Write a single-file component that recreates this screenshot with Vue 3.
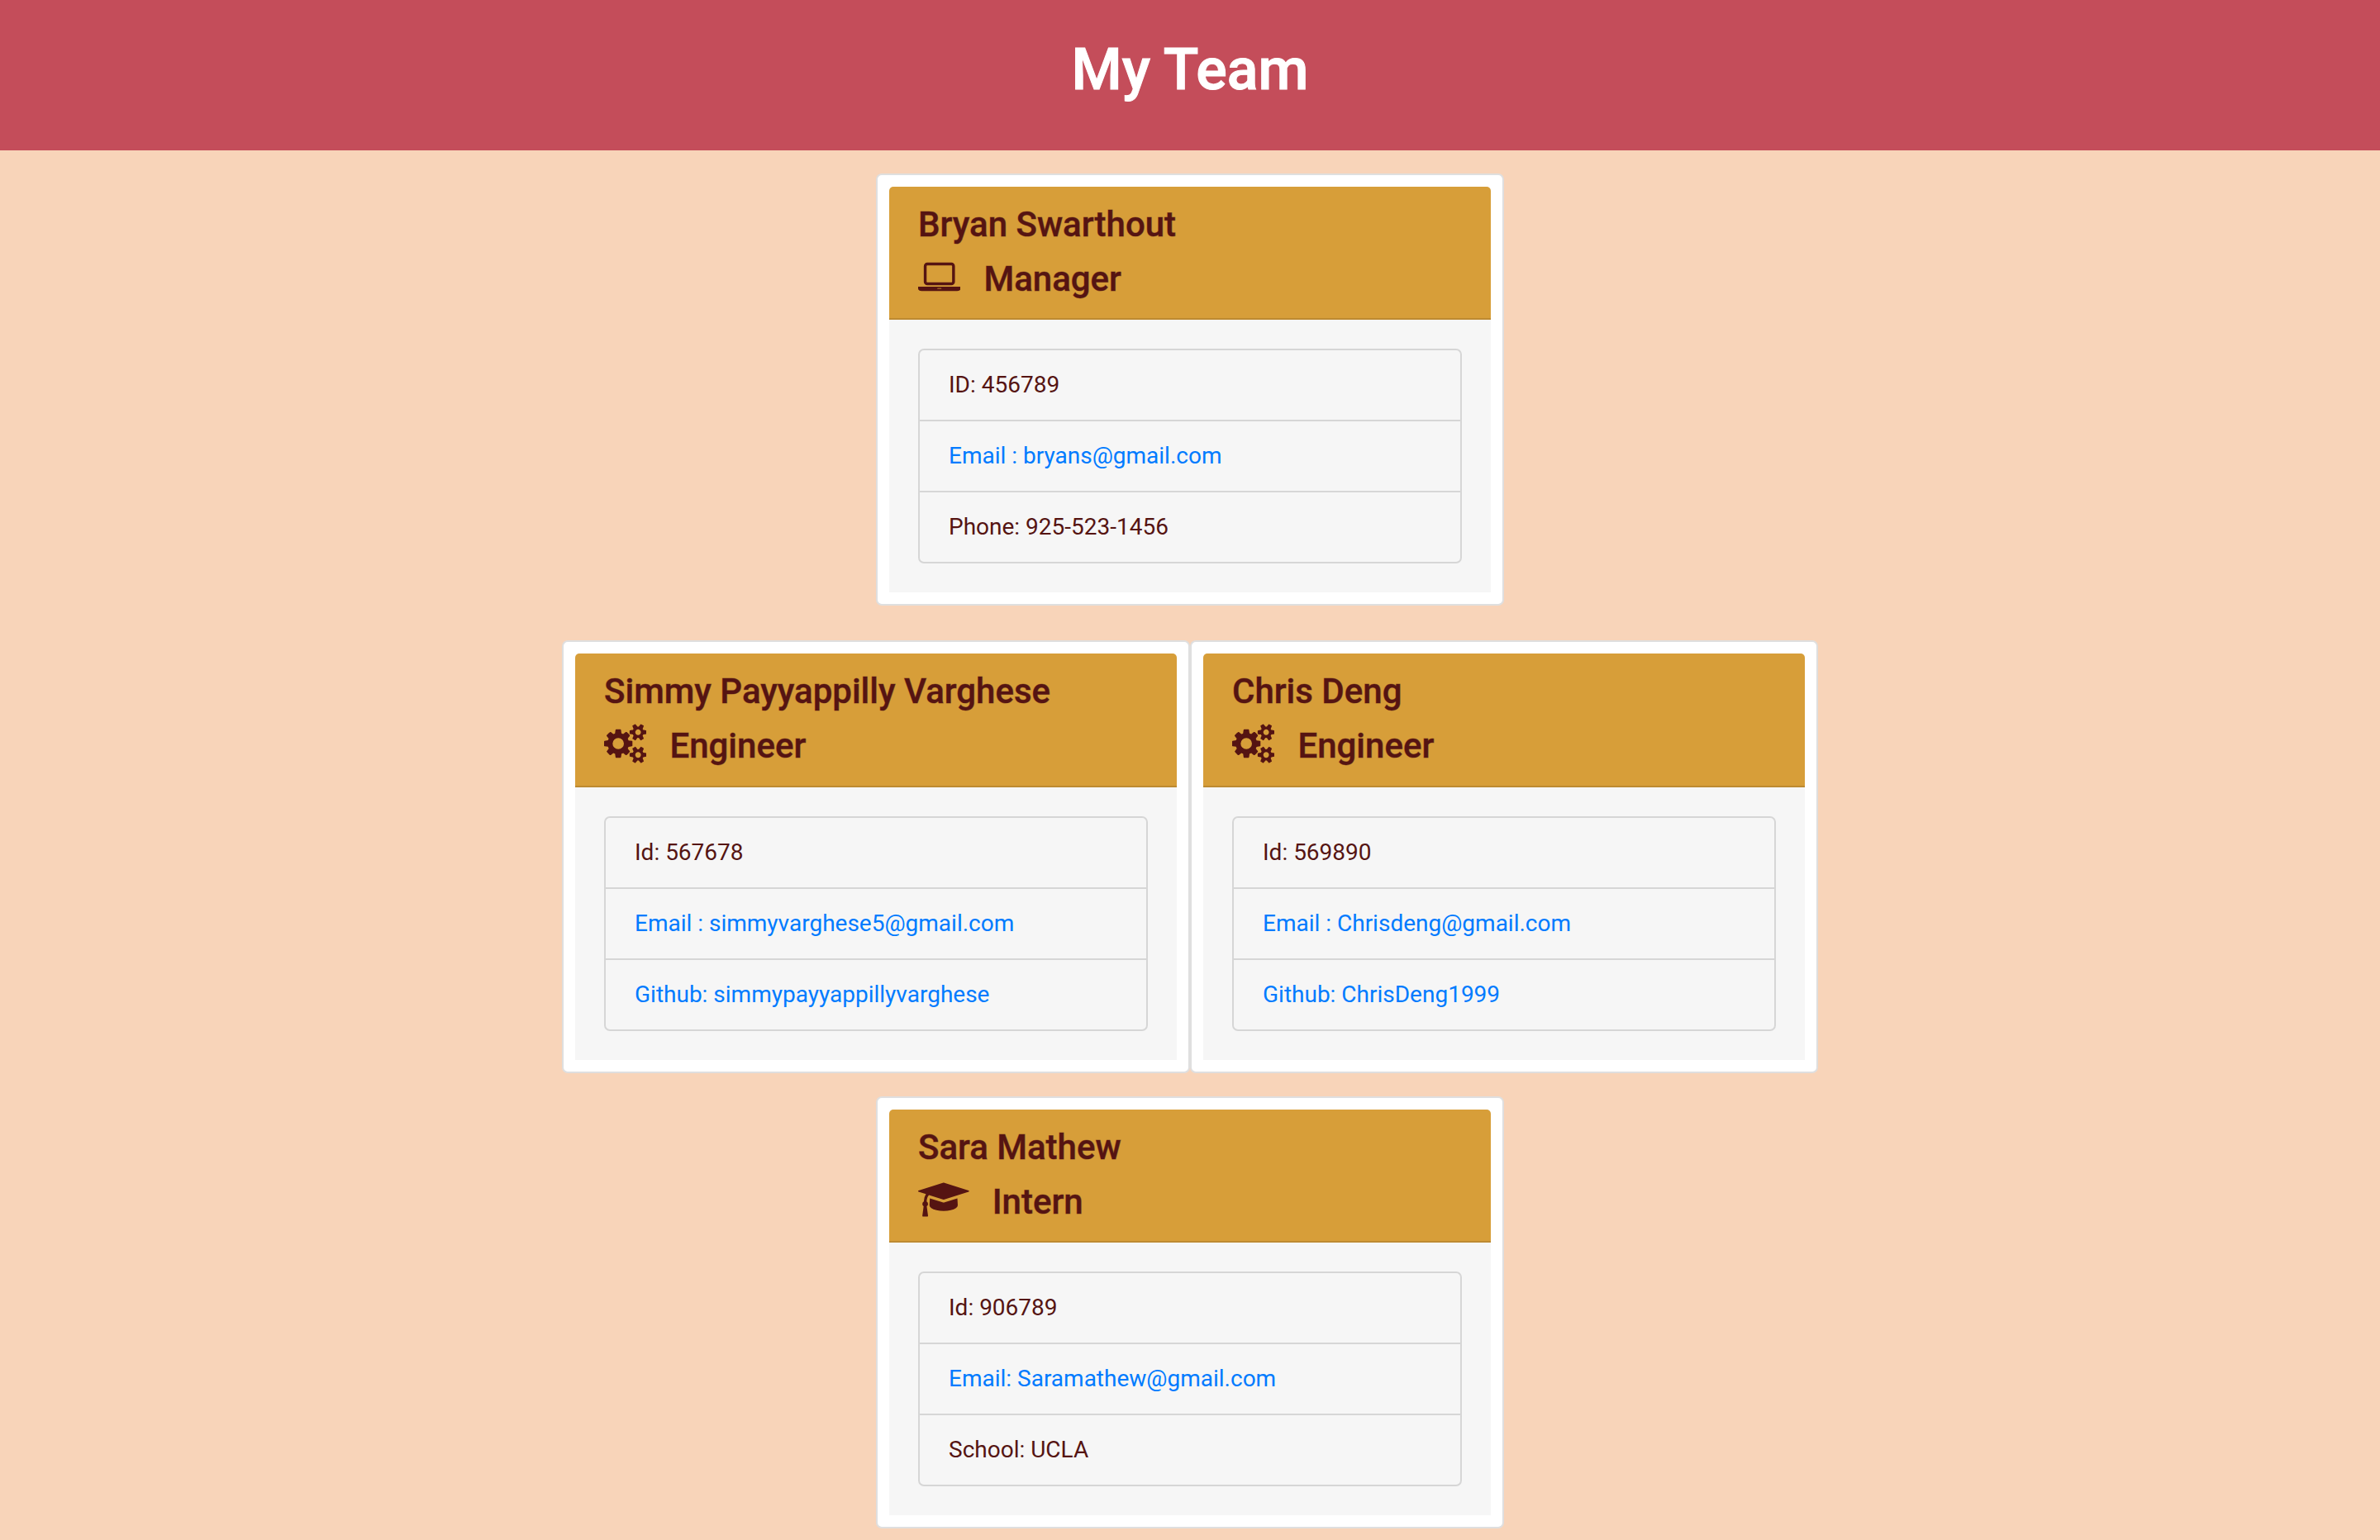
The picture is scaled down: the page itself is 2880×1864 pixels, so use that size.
<script setup>
const icons = {
  laptop: {
    box: '0 0 1920 1792',
    path: 'M416 1280q-66 0-113-47t-47-113v-704q0-66 47-113t113-47h1088q66 0 113 47t47 113v704q0 66-47 113t-113 47h-1088zm-32-864v704q0 13 9.5 22.5t22.5 9.5h1088q13 0 22.5-9.5t9.5-22.5v-704q0-13-9.5-22.5t-22.5-9.5h-1088q-13 0-22.5 9.5t-9.5 22.5zm1376 928h160v96q0 40-47 68t-113 28h-1600q-66 0-113-28t-47-68v-96h1760zm-720 96q16 0 16-16t-16-16h-160q-16 0-16 16t16 16h160z'
  },
  cogs: {
    box: '0 0 1920 1792',
    path: 'M896 896q0-106-75-181t-181-75-181 75-75 181 75 181 181 75 181-75 75-181zm768 512q0-52-38-90t-90-38-90 38-38 90q0 53 37.5 90.5t90.5 37.5 90.5-37.5 37.5-90.5zm0-1024q0-52-38-90t-90-38-90 38-38 90q0 53 37.5 90.5t90.5 37.5 90.5-37.5 37.5-90.5zm-384 421v185q0 10-7 19.5t-16 10.5l-155 24q-11 35-32 76 34 48 90 115 7 11 7 20 0 12-7 19-23 30-82.5 89.5t-78.5 59.5q-11 0-21-7l-115-90q-37 19-77 31-11 108-23 155-7 24-30 24h-186q-11 0-20-7.5t-10-17.5l-23-153q-34-10-75-31l-118 89q-7 7-20 7-11 0-21-8-144-133-144-160 0-9 7-19 10-14 41-53t47-61q-23-44-35-82l-152-24q-10-1-17-9.5t-7-19.5v-185q0-10 7-19.5t16-10.5l155-24q11-35 32-76-34-48-90-115-7-11-7-20 0-12 7-20 22-30 82-89t79-59q11 0 21 7l115 90q34-18 77-32 11-108 23-154 7-24 30-24h186q11 0 20 7.5t10 17.5l23 153q34 10 75 31l118-89q8-7 20-7 11 0 21 8 144 133 144 160 0 8-7 19-12 16-42 54t-45 60q23 48 34 82l152 23q10 2 17 10.5t7 19.5zm640 533v140q0 16-149 31-12 27-30 52 51 113 51 138 0 4-4 7-122 71-124 71-8 0-46-47t-52-68q-20 2-30 2t-30-2q-14 21-52 68t-46 47q-2 0-124-71-4-3-4-7 0-25 51-138-18-25-30-52-149-15-149-31v-140q0-16 149-31 13-29 30-52-51-113-51-138 0-4 4-7 4-2 35-20t59-34 30-16q8 0 46 46.5t52 67.5q20-2 30-2t30 2q51-71 92-112l6-2q4 0 124 70 4 3 4 7 0 25-51 138 17 23 30 52 149 15 149 31zm0-1024v140q0 16-149 31-12 27-30 52 51 113 51 138 0 4-4 7-122 71-124 71-8 0-46-47t-52-68q-20 2-30 2t-30-2q-14 21-52 68t-46 47q-2 0-124-71-4-3-4-7 0-25 51-138-18-25-30-52-149-15-149-31v-140q0-16 149-31 13-29 30-52-51-113-51-138 0-4 4-7 4-2 35-20t59-34 30-16q8 0 46 46.5t52 67.5q20-2 30-2t30 2q51-71 92-112l6-2q4 0 124 70 4 3 4 7 0 25-51 138 17 23 30 52 149 15 149 31z'
  },
  cap: {
    box: '0 0 2304 1792',
    path: 'M1774 836l18 316q4 69-82 128t-235 93.5-323 34.5-323-34.5-235-93.5-82-128l18-316 574 181q22 7 48 7t48-7zm530-324q0 23-22 31l-1120 352q-4 1-10 1t-10-1l-652-206q-43 34-71 111.5t-34 178.5q63 36 63 109 0 69-58 107l58 433q2 14-8 25-9 11-24 11h-192q-15 0-24-11-10-11-8-25l58-433q-58-38-58-107 0-73 65-111 11-207 98-330l-333-104q-22-8-22-31t22-31l1120-352q4-1 10-1t10 1l1120 352q22 8 22 31z'
  }
}

const rows = [
  {
    id: 'managers',
    members: [
      {
        name: 'Bryan Swarthout',
        role: 'Manager',
        icon: 'laptop',
        details: [
          { text: 'ID: 456789' },
          { text: 'Email : bryans@gmail.com', href: 'mailto:bryans@gmail.com' },
          { text: 'Phone: 925-523-1456' }
        ]
      }
    ]
  },
  {
    id: 'engineers',
    members: [
      {
        name: 'Simmy Payyappilly Varghese',
        role: 'Engineer',
        icon: 'cogs',
        details: [
          { text: 'Id: 567678' },
          { text: 'Email : simmyvarghese5@gmail.com', href: 'mailto:simmyvarghese5@gmail.com' },
          { text: 'Github: simmypayyappillyvarghese', href: 'https://github.com/simmypayyappillyvarghese' }
        ]
      },
      {
        name: 'Chris Deng',
        role: 'Engineer',
        icon: 'cogs',
        details: [
          { text: 'Id: 569890' },
          { text: 'Email : Chrisdeng@gmail.com', href: 'mailto:Chrisdeng@gmail.com' },
          { text: 'Github: ChrisDeng1999', href: 'https://github.com/ChrisDeng1999' }
        ]
      }
    ]
  },
  {
    id: 'interns',
    members: [
      {
        name: 'Sara Mathew',
        role: 'Intern',
        icon: 'cap',
        details: [
          { text: 'Id: 906789' },
          { text: 'Email: Saramathew@gmail.com', href: 'mailto:Saramathew@gmail.com' },
          { text: 'School: UCLA' }
        ]
      }
    ]
  }
]
</script>

<template>
  <header class="banner">
    <h1>My Team</h1>
  </header>
  <main class="team">
    <section v-for="row in rows" :key="row.id" class="row" :class="row.id">
      <article v-for="member in row.members" :key="member.name" class="card">
        <div class="card-header">
          <h2 class="name">{{ member.name }}</h2>
          <h3 class="role">
            <svg class="icon" :viewBox="icons[member.icon].box" aria-hidden="true">
              <path :d="icons[member.icon].path" />
            </svg>
            <span>{{ member.role }}</span>
          </h3>
        </div>
        <div class="card-body">
          <ul class="details">
            <li v-for="item in member.details" :key="item.text">
              <a v-if="item.href" :href="item.href">{{ item.text }}</a>
              <template v-else>{{ item.text }}</template>
            </li>
          </ul>
        </div>
      </article>
    </section>
  </main>
</template>

<style>
body {
  margin: 0;
  background: #f8d4b9;
}
</style>

<style scoped>
.banner {
  padding: 42px 28px 56px;
  background: #c44d5a;
  color: #fff;
  font-family: Roboto, sans-serif;
  text-align: center;
}

.banner h1 {
  margin: 0;
  font-size: 70px;
  font-weight: 500;
  line-height: 84px;
  -webkit-text-stroke: 1px currentColor;
}

.team {
  padding: 28px 0 14px;
  color: #551412;
  font-family: Roboto, sans-serif;
  font-size: 28px;
  line-height: 42px;
}

.row {
  display: flex;
  flex-wrap: wrap;
  justify-content: center;
  margin-bottom: 28px;
}

.row.managers {
  margin-bottom: 42px;
}

.row.interns {
  margin-bottom: 0;
}

.card {
  box-sizing: border-box;
  width: 760px;
  max-width: 100%;
  padding: 14px;
  border: 2px solid #dfdfdf;
  border-radius: 7px;
  background: #fff;
}

.card-header {
  padding: 21px 35px;
  border-bottom: 2px solid #bd8a31;
  border-radius: 5px 5px 0 0;
  background: #d79e39;
}

.name,
.role {
  margin: 0;
  font-size: 42px;
  font-weight: 500;
  -webkit-text-stroke: 1px rgba(85, 20, 18, 0.45);
}

.name {
  margin-bottom: 14px;
  line-height: 50px;
}

.role {
  display: flex;
  align-items: flex-start;
  gap: 28px;
  line-height: 53px;
}

.engineers .role {
  line-height: 54px;
}

.icon {
  height: 48px;
  fill: currentColor;
}

.card-body {
  padding: 35px;
  background: #f6f6f6;
}

.details {
  margin: 0;
  padding: 0;
  border: 2px solid #d6d6d6;
  border-radius: 7px;
  list-style: none;
}

.details li {
  padding: 21px 35px;
}

.details li + li {
  border-top: 2px solid #d6d6d6;
}

.details a {
  color: #007bff;
  text-decoration: none;
}
</style>
